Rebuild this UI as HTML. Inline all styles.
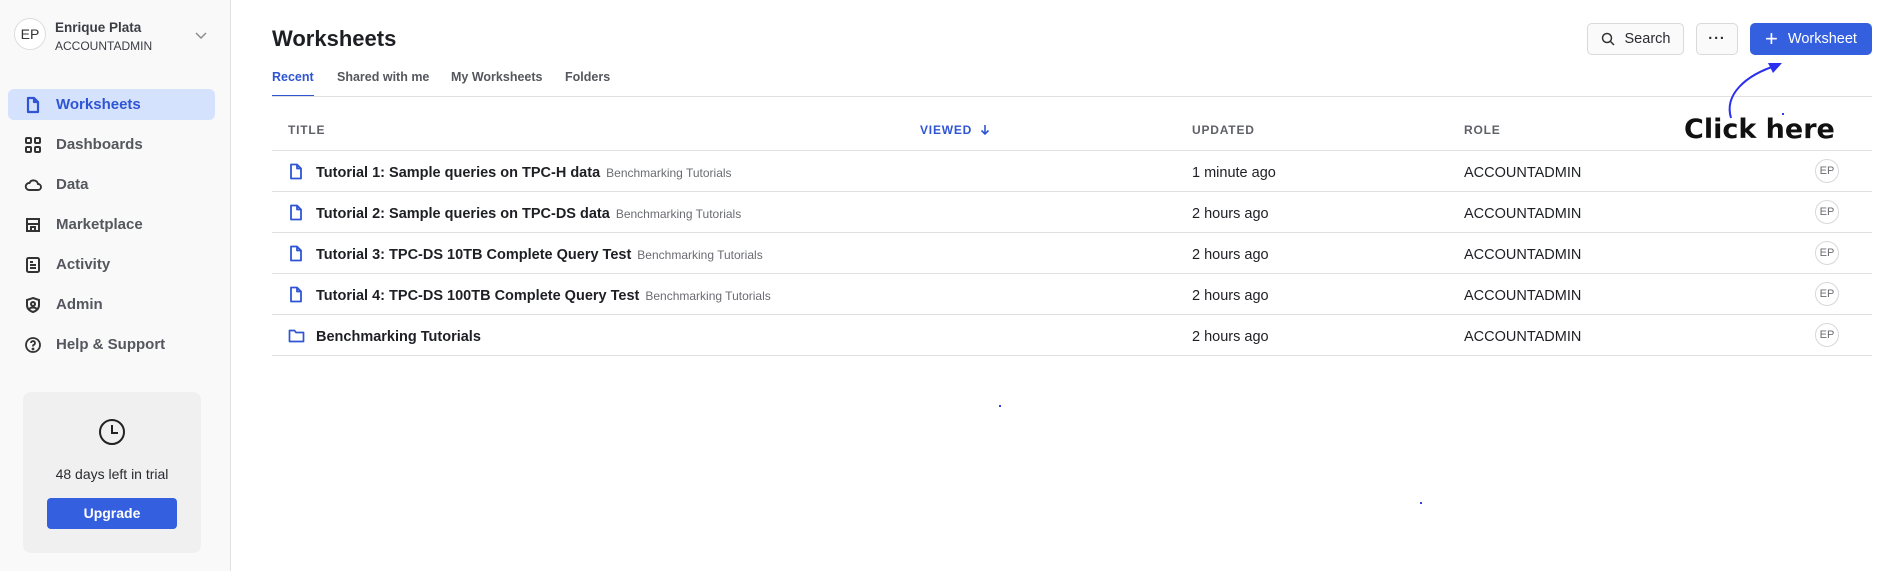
<!DOCTYPE html>
<html><head><meta charset="utf-8"><style>
*{box-sizing:border-box;margin:0;padding:0}
body{width:1904px;height:571px;overflow:hidden;background:#fff;font-family:"Liberation Sans",Arial,sans-serif;color:#1e1f24;position:relative}
.abs{position:absolute}
#side{left:0;top:0;width:231px;height:571px;background:#f9f9f9;border-right:1px solid #e2e2e2}
.nav{position:absolute;left:8px;width:207px;height:31px;border-radius:6px;display:flex;align-items:center;font-size:15px;font-weight:bold;color:#55575e}
.nav svg{position:absolute;left:16px}
.nav span{position:absolute;left:48px;top:7px}
.nav.act{background:#d5e2fd;color:#2f55d4}
.tab{position:absolute;top:70px;font-size:12.5px;font-weight:bold;color:#55575e}
.th{position:absolute;top:123px;font-size:12px;font-weight:bold;letter-spacing:.8px;color:#5f6168}
.line{position:absolute;left:272px;width:1600px;height:1px;background:#e0e0e0}
.row{position:absolute;left:272px;width:1600px;height:41px;font-size:14.5px}
.row .t{position:absolute;left:44px;top:14px;font-weight:bold;white-space:nowrap}
.row .t small{font-weight:normal;font-size:12px;color:#6a6c72;margin-left:6px}
.row .u{position:absolute;left:920px;top:14px}
.row .r{position:absolute;left:1192px;top:14px}
.row svg{position:absolute;left:16px;top:12px}
.row .av{position:absolute;left:1543px;top:8px;width:24px;height:24px;border-radius:50%;border:1px solid #d8d8d8;font-size:11px;color:#6a6c72;text-align:center;line-height:22px}
.btn{position:absolute;top:23px;height:32px;border:1px solid #d9d9d9;border-radius:5px;background:#fafafa;font-size:14.5px;color:#2a2b30;display:flex;align-items:center;justify-content:center}
</style></head><body>
<div id="side" class="abs">
 <div class="abs" style="left:14px;top:18px;width:32px;height:32px;border-radius:50%;border:1px solid #ddd;background:#fff;font-size:14px;color:#333;text-align:center;line-height:30px">EP</div>
 <div class="abs" style="left:55px;top:20px;font-size:13.5px;font-weight:bold;color:#3b3d44">Enrique Plata</div>
 <div class="abs" style="left:55px;top:39px;font-size:12px;color:#3b3d44">ACCOUNTADMIN</div>
 <svg class="abs" style="left:195px;top:32px" width="12" height="8"><path d="M1 1l5 5 5-5" fill="none" stroke="#888" stroke-width="1.4"/></svg>
 <div class="nav act" style="top:89px"><svg width="18" height="18" viewBox="0 0 18 18"><path d="M4 2h6l4 4v10H4z M10 2v4h4" fill="none" stroke="#2f55d4" stroke-width="2.2" stroke-linejoin="round"/></svg><span>Worksheets</span></div>
 <div class="nav" style="top:129px"><svg width="18" height="18" viewBox="0 0 18 18" fill="none" stroke="#333" stroke-width="2"><rect x="2" y="2" width="5" height="5" rx="1"/><rect x="11" y="2" width="5" height="5" rx="1"/><rect x="2" y="11" width="5" height="5" rx="1"/><rect x="11" y="11" width="5" height="5" rx="1"/></svg><span>Dashboards</span></div>
 <div class="nav" style="top:169px"><svg width="18" height="18" viewBox="0 0 18 18"><path d="M5 14h9a3 3 0 0 0 0-6 4.5 4.5 0 0 0-8.5-1A3.5 3.5 0 0 0 5 14z" fill="none" stroke="#333" stroke-width="1.9"/></svg><span>Data</span></div>
 <div class="nav" style="top:209px"><svg width="18" height="18" viewBox="0 0 18 18" fill="none" stroke="#333" stroke-width="2"><path d="M3 3h12v12H3zM3 8h12M7 15v-4h4v4"/></svg><span>Marketplace</span></div>
 <div class="nav" style="top:249px"><svg width="18" height="18" viewBox="0 0 18 18" fill="none" stroke="#333" stroke-width="2"><rect x="3" y="2" width="12" height="14" rx="1.5"/><path d="M6 6h3M6 9h6M6 12h6"/></svg><span>Activity</span></div>
 <div class="nav" style="top:289px"><svg width="18" height="18" viewBox="0 0 18 18" fill="none" stroke="#333" stroke-width="2"><path d="M9 2l6 2v5c0 4-3 6-6 7-3-1-6-3-6-7V4z"/><circle cx="9" cy="8" r="2"/><path d="M5.5 13c1-2 6-2 7 0"/></svg><span>Admin</span></div>
 <div class="nav" style="top:329px"><svg width="18" height="18" viewBox="0 0 18 18" fill="none" stroke="#333" stroke-width="1.8"><circle cx="9" cy="9" r="7"/><path d="M7 7a2 2 0 1 1 2.5 2c-.5.2-.5.6-.5 1.5"/><circle cx="9" cy="13" r=".5" fill="#333"/></svg><span>Help &amp; Support</span></div>
 <div class="abs" style="left:23px;top:392px;width:178px;height:161px;background:#f0f0f0;border-radius:8px">
  <svg class="abs" style="left:75px;top:26px" width="28" height="28" viewBox="0 0 28 28" fill="none" stroke="#222" stroke-width="2"><circle cx="14" cy="14" r="12"/><path d="M14 7v8h6"/></svg>
  <div class="abs" style="left:0;width:178px;top:74px;text-align:center;font-size:14px;color:#2a2b30">48 days left in trial</div>
  <div class="abs" style="left:24px;top:106px;width:130px;height:31px;background:#3460e0;border-radius:4px;color:#fff;font-size:14px;font-weight:bold;text-align:center;line-height:31px">Upgrade</div>
 </div>
</div>
<div class="abs" style="left:272px;top:26px;font-size:22px;font-weight:bold;color:#1e1f24">Worksheets</div>
<div class="tab" style="left:272px;color:#2f55d4">Recent</div>
<div class="abs" style="left:272px;top:95px;width:42px;height:2px;background:#2f55d4"></div>
<div class="tab" style="left:337px">Shared with me</div>
<div class="tab" style="left:451px">My Worksheets</div>
<div class="tab" style="left:565px">Folders</div>
<div class="line" style="top:96px"></div>
<div class="th" style="left:288px">TITLE</div>
<div class="th" style="left:920px;color:#2f55d4">VIEWED <svg width="10" height="11" viewBox="0 0 10 11" style="vertical-align:-1px;margin-left:4px"><path d="M5 1v9M1.5 6.5L5 10l3.5-3.5" fill="none" stroke="#2f55d4" stroke-width="1.6"/></svg></div>
<div class="th" style="left:1192px">UPDATED</div>
<div class="th" style="left:1464px">ROLE</div>
<div class="line" style="top:150px"></div>
<div class="row" style="top:151px"><svg width="16" height="17" viewBox="0 0 16 17"><path d="M3 1.5h6l4 4v10H3z M9 1.5v4h4" fill="none" stroke="#2f55d4" stroke-width="1.8" stroke-linejoin="round"/></svg><div class="t">Tutorial 1: Sample queries on TPC-H data<small>Benchmarking Tutorials</small></div><div class="u">1 minute ago</div><div class="r">ACCOUNTADMIN</div><div class="av">EP</div></div>
<div class="line" style="top:191px"></div>
<div class="row" style="top:192px"><svg width="16" height="17" viewBox="0 0 16 17"><path d="M3 1.5h6l4 4v10H3z M9 1.5v4h4" fill="none" stroke="#2f55d4" stroke-width="1.8" stroke-linejoin="round"/></svg><div class="t">Tutorial 2: Sample queries on TPC-DS data<small>Benchmarking Tutorials</small></div><div class="u">2 hours ago</div><div class="r">ACCOUNTADMIN</div><div class="av">EP</div></div>
<div class="line" style="top:232px"></div>
<div class="row" style="top:233px"><svg width="16" height="17" viewBox="0 0 16 17"><path d="M3 1.5h6l4 4v10H3z M9 1.5v4h4" fill="none" stroke="#2f55d4" stroke-width="1.8" stroke-linejoin="round"/></svg><div class="t">Tutorial 3: TPC-DS 10TB Complete Query Test<small>Benchmarking Tutorials</small></div><div class="u">2 hours ago</div><div class="r">ACCOUNTADMIN</div><div class="av">EP</div></div>
<div class="line" style="top:273px"></div>
<div class="row" style="top:274px"><svg width="16" height="17" viewBox="0 0 16 17"><path d="M3 1.5h6l4 4v10H3z M9 1.5v4h4" fill="none" stroke="#2f55d4" stroke-width="1.8" stroke-linejoin="round"/></svg><div class="t">Tutorial 4: TPC-DS 100TB Complete Query Test<small>Benchmarking Tutorials</small></div><div class="u">2 hours ago</div><div class="r">ACCOUNTADMIN</div><div class="av">EP</div></div>
<div class="line" style="top:314px"></div>
<div class="row" style="top:315px"><svg width="17" height="17" viewBox="0 0 17 17"><path d="M1.5 3.5h5l1.5 2h7.5v9h-14z" fill="none" stroke="#2f55d4" stroke-width="1.7" stroke-linejoin="round"/></svg><div class="t">Benchmarking Tutorials</div><div class="u">2 hours ago</div><div class="r">ACCOUNTADMIN</div><div class="av">EP</div></div>
<div class="line" style="top:355px"></div>
<div class="btn" style="left:1587px;width:97px"><svg width="14" height="14" viewBox="0 0 14 14" style="margin-right:10px"><circle cx="6" cy="6" r="4.5" fill="none" stroke="#333" stroke-width="1.5"/><path d="M9.5 9.5L13 13" stroke="#333" stroke-width="1.5"/></svg>Search</div>
<div class="btn" style="left:1696px;width:42px;font-weight:bold;letter-spacing:1px">···</div>
<div class="btn" style="left:1750px;width:122px;background:#3460e0;border-color:#3460e0;color:#fff"><span style="font-size:22px;margin-right:10px;line-height:20px">+</span>Worksheet</div>
<svg class="abs" style="left:1700px;top:55px" width="100" height="75"><path d="M31 63C24 40 45 20 78 10" fill="none" stroke="#2a2ff0" stroke-width="2"/><path d="M82 8l-14 0 5 10z" fill="#2a2ff0"/></svg>
<div class="abs" style="left:1684px;top:114px;font-family:'DejaVu Sans',sans-serif;font-size:27px;font-weight:bold;color:#111">Click here</div>
<div class="abs" style="left:999px;top:405px;width:2px;height:2px;background:#3a3ae0"></div>
<div class="abs" style="left:1420px;top:502px;width:2px;height:2px;background:#3a3ae0"></div>
<div class="abs" style="left:1782px;top:113px;width:2px;height:2px;background:#3a3ae0"></div>
</body></html>
